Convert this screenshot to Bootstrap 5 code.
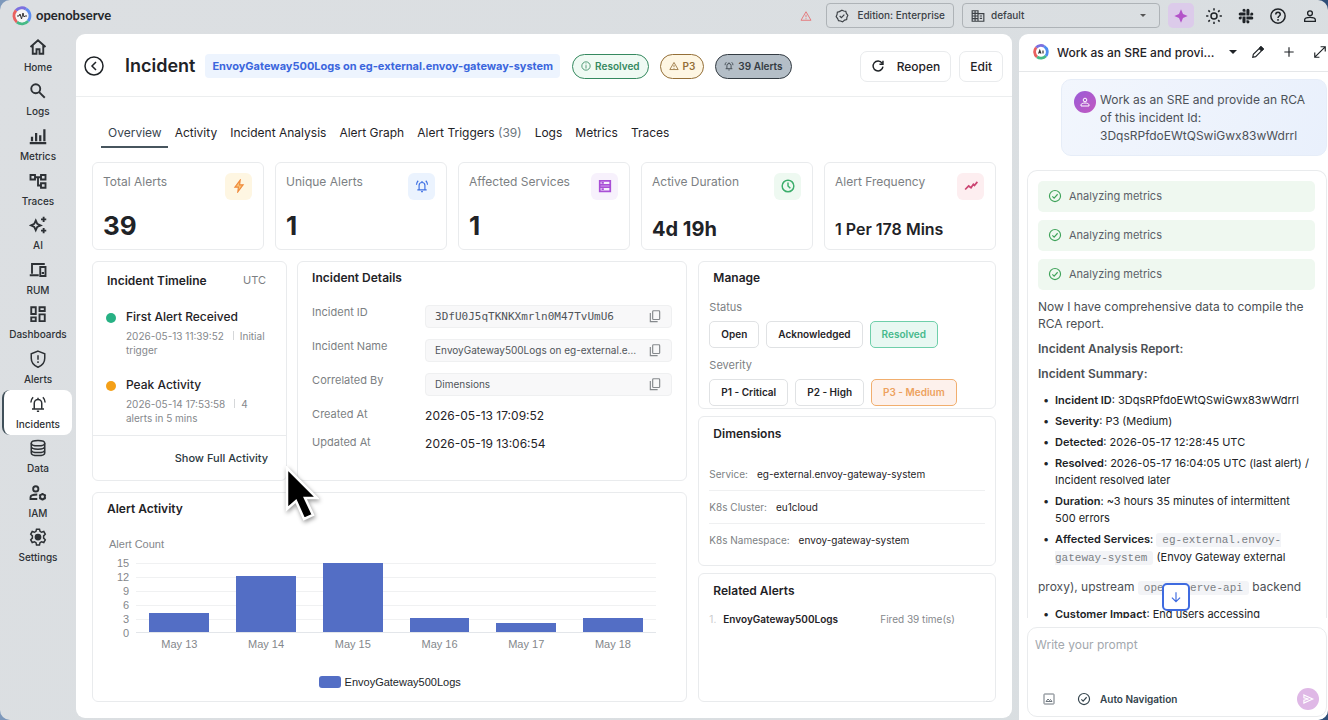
<!DOCTYPE html>
<html lang="en">
<head>
<meta charset="utf-8">
<meta name="viewport" content="width=device-width, initial-scale=1">
<title>OpenObserve - Incident</title>
<link rel="stylesheet" href="https://cdn.jsdelivr.net/npm/bootstrap@5.3.0/dist/css/bootstrap.min.css">
<style>
:root{--line:#e9ebed;--ink:#1f2327;--muted:#7c7f83;--blue:#3b66dd}
body{font-family:Inter,"Liberation Sans",sans-serif;font-size:12px;line-height:17px;color:var(--ink);background:linear-gradient(90deg,#7d98bb,#4b6a70 30%,#2f4e78)}
svg{display:block;flex:none;fill:none;stroke:currentColor;stroke-width:2}
.sw25{stroke-width:2.5}.sw3{stroke-width:3}.solid{fill:currentColor;stroke:none}
button{font:inherit;color:inherit}
a{color:inherit;text-decoration:none}
.i10{width:10px;height:10px}.i12{width:12px;height:12px}.i14{width:14px;height:14px}.i16{width:16px;height:16px}.i18{width:18px;height:18px}.i20{width:20px;height:20px}
.shell{background:linear-gradient(120deg,#dcdfe2,#d9dee1);border-radius:10px}
.topbar{height:34px;padding:0 10px 2px 12px}
.brandtext{font-family:Lato,Inter,sans-serif;font-size:13px;font-weight:700;color:#24262a}
.warnicon{color:#e57b7e;margin-right:14px}
.topbox{height:25px;border:1px solid #aeb3b7;border-radius:4px;font-weight:500;font-size:10px;color:#3c4146;background:none}
.topbox select{appearance:none;border:0;background:transparent url("data:image/svg+xml,%3Csvg xmlns='http://www.w3.org/2000/svg' viewBox='0 0 8 5'%3E%3Cpath d='M1 1h6L4 4z' fill='%23555'/%3E%3C/svg%3E") no-repeat right 12px center/8px 5px;font:inherit;color:inherit;padding:0 24px 0 6px}
.orgbox{width:198px}
.topicons{gap:15px}
.plain{border:0;background:none;padding:0}
.ai-on{width:26px;height:25px;border:0;padding:0;margin-right:-4px;border-radius:5px;background:#dccbea;color:#b353c9}
.side{width:76px;flex:none}
.side ul{height:535px}
.side li{flex:1 1 0}
.side a{display:flex;flex-direction:column;align-items:center;justify-content:center;gap:4px;height:100%;margin:0 4px 0 2px;padding-top:1px;font-size:10px;font-weight:500;line-height:15px;color:#2d3135;border-radius:8px;border-left:2px solid transparent}
.side a.active{background:#fff;border-left-color:#40505a}
.panel{background:#fff;border-radius:9px;margin-bottom:2px}
.chat{flex:0 0 309px;background:#fff;border-radius:9px 0 10px 0;margin-left:7px}
.mainhead{height:63px;border-bottom:1px solid #eceeef;padding:3px 9px 0 8px}
.mainhead h1{font-size:18px;line-height:24px;font-weight:600;margin:0 10px 0 21px}
.titlechip{background:#edf4fe;color:var(--blue);border-radius:4px;padding:4px 7px;font-size:11px;line-height:16px;font-weight:700}
.pills{gap:11px;margin-left:12px}
.pill{border:1px solid;border-radius:13px;height:25px;font-size:10px;font-weight:600;padding:0 8px;gap:4px}
.ok{color:#35895f;background:#effaf3}.warnp{color:#946f38;background:#fef6e3}.cnt{color:#343c43;background:#b4bec7}
.outbtn{border:1px solid var(--line);border-radius:7px;height:31px;background:#fff;font-weight:500;padding:0 10px}
.tabs{padding:26px 16px 0 25px}
.tabs .nav-link{padding:0 6px 3px 7px;line-height:20px;color:var(--ink);border-bottom:2px solid transparent;font-size:12px;font-weight:400}
.tabs .nav-link.active{border-color:#47555e;color:#38454e}
.content{padding:14px 16px 16px}
.gap11{gap:11px}
.gap7{gap:7px}
.stat{border:1px solid var(--line);border-radius:6px;flex:1 1 0;height:88px;padding:10px 11px 5px 10px;min-width:0}
.stat .lab{color:var(--muted);font-size:12px}
.stat .sq{width:27px;height:27px;border-radius:6px}
.stat .big{font-size:26px;line-height:36px;font-weight:700}
.stat .mid{font-size:20px;line-height:30px;font-weight:700}
.stat .low{font-size:16px;line-height:30px;font-weight:600}
.tone-a{background:#fef6e2;color:#ef8a3c}.tone-b{background:#ebf3fe;color:#3d6fe3}.tone-c{background:#f7f1fc;color:#a94fd6}.tone-d{background:#eef9f1;color:#3cae6c}.tone-e{background:#fdeef0;color:#cc4673}
.box{border:1px solid var(--line);border-radius:6px}
.lower{display:grid;grid-template-columns:2fr 1fr;gap:11px;flex:1}
.upper{display:grid;grid-template-columns:1fr 2fr;gap:10px;height:220px}
h2{font-size:12px;line-height:17px;font-weight:600;margin:0}
.soft{color:var(--muted);font-size:11px}
.tlhead{padding:10px 16px 0 14px}
.event{gap:10px;padding:19px 16px 0 13px}
.event strong{display:block;font-weight:500;margin-bottom:4px}
.event .sep{display:inline-block;width:1px;height:9px;background:#d5d7d9;margin:0 6px 0 9px}
.dot{width:10px;height:10px;border-radius:50%;margin-top:5px;flex:none}
.green{background:#27b184}.amber{background:#f4a018}
.tlfoot{border-top:1px solid var(--line);padding:13px 18px 13px 0}
.strongbtn{font-size:11px;font-weight:500;color:#2b3840}
.tiny{font-size:10px;line-height:14px;color:#85888c}
.details{margin:0;padding-top:19px}
.drow{display:grid;grid-template-columns:113px 1fr;height:34px}
.drow.short{height:28px}
.drow dt{font-weight:400;font-size:11px;line-height:14px;color:var(--muted)}
.drow dd{margin:0;min-width:0}
.val{background:#f8f8f9;border:1px solid #eff0f1;border-radius:4px;height:23px;padding:0 9px;font-size:10px;color:#50555a}
.val svg{color:#85898d}
.val code{font-family:"DejaVu Sans Mono","Liberation Mono",monospace;font-size:11px;color:#50555a}
.opt{border:1px solid #e0e2e4;border-radius:5px;height:27px;background:#fff;padding:0 11px;font-size:10px;font-weight:600}
.opt.g{border-color:#6fcfaa;background:#e8f8f2;color:#46b98c}
.opt.o{border-color:#f1ae6e;background:#fdf1ec;color:#eda25e}
.dim{padding:8px 0;border-bottom:1px solid #eff0f1;font-size:10px;line-height:16px}
.dim:last-child{border:0}
.dim span{color:var(--muted);margin-right:9px}
.rank{color:#c9cbcd}
.chartbox{padding:7px 14px}
.plot{height:70px;background:repeating-linear-gradient(#f0f1f2 0 1px,transparent 1px 14px);border-bottom:1px solid #e3e6ea}
.plot div{flex:1 1 0;display:flex;align-items:flex-end;justify-content:center}
.plot i{display:block;width:69%;background:#536ec5}
.axis{font-family:"Liberation Sans",sans-serif;font-size:11px;line-height:14px;color:#84878b}
.swatch{width:22px;height:12px;border-radius:3px;background:#536ec5}
.chathead{height:38px;border-bottom:1px solid #e5e7e9;padding:0 0 0 14px}
.chathead h2{font-weight:500;width:158px}
.chattools{gap:17px;margin-left:13px}
.bubble{margin:7px 1px 0 42px;background:linear-gradient(115deg,#f2f6fd,#e9f0fc);border:1px solid #e6edf8;border-radius:10px;padding:11px 12px 10px;line-height:18px;color:#4c5158}
.avatar{width:22px;height:22px;border-radius:50%;background:linear-gradient(135deg,#9a5bd8,#c259c0);color:#fff;flex:none}
.answer{border:1px solid var(--line);border-bottom:0;border-radius:10px 10px 0 0;margin:14px 1px 0 8px;padding:10px 11px 0 10px;color:#4c5055}
.step{height:31px;border-radius:5px;background:#eff8f0;margin-bottom:8px;padding:0 10px;font-size:11px;color:#5b6168;gap:7px}
.step svg{color:#40a35b}
.answer p{margin:0 0 8px}
.answer ul{list-style-type:"•\00a0\00a0";margin:0 4px 0 0;padding-left:17px;font-size:11px;color:#202326}
.answer ul.facts{padding-top:2px}
.answer li{margin-bottom:4px}
.answer code{font-family:"Liberation Mono",monospace;font-size:11px;color:#7b7f84;background:#f3f4f7;padding:1px 6px;border-radius:3px}
.answer strong{font-weight:600}
.answer .more{margin:11px 0 9px}
.jump{left:50%;bottom:7px;margin-left:-12px;width:28px;height:28px;border:2px solid #3f6be0;border-radius:5px;background:#fff;color:#3f6be0;padding:0}
.prompt{border:1px solid var(--line);border-radius:10px;margin:9px 1px 3px 8px;height:90px;padding:8px 7px 6px 7px}
.prompt textarea{border:0;resize:none;width:100%;padding:0;outline:0;font:inherit}
.prompt textarea::placeholder{color:#a3a8ae}
.auto{margin-left:22px;gap:9px;font-size:10px;font-weight:600;color:#33434c}
.send{width:22px;height:22px;border-radius:50%;background:#dfb8e6;color:#fff;border:0;padding:0}
.pointer{left:285px;top:466px;width:34px;height:60px;filter:drop-shadow(1px 2px 2px #0006)}
</style>
</head>
<body>
<svg width="0" height="0" class="position-absolute" aria-hidden="true">
<symbol id="bell" viewBox="0 0 24 24"><path d="M7 18v-7a5 5 0 0110 0v7M4 18.500h16M10.500 21.500h3M12 6V3.500M2.500 10c0-3 1-5 3-7M21.500 10c0-3-1-5-3-7"/></symbol>
<symbol id="check" viewBox="0 0 24 24"><circle cx="12" cy="12" r="9.500"/><path d="M7.500 12.500l3 3 6-6.500"/></symbol>
<symbol id="tri" viewBox="0 0 24 24"><path d="M12 3.500L22 20.500H2zM12 9.500v5M12 16.500v2"/></symbol>
<symbol id="copy" viewBox="0 0 24 24"><rect x="8" y="3" width="12" height="15" rx="1.500"/><path d="M4 7v14.500h12.500"/></symbol>
<symbol id="user" viewBox="0 0 24 24"><circle cx="12" cy="8" r="3.600"/><path d="M4 20v-2.500c0-2 4-3.500 8-3.500s8 1.500 8 3.500V20z"/></symbol>
</svg>
<div class="shell vh-100 d-flex flex-column overflow-hidden">
<header class="topbar d-flex align-items-center">
  <a href="#" class="d-flex align-items-center gap-1 me-auto" aria-label="openobserve home">
    <svg width="20" height="20" viewBox="0 0 20 20"><g stroke-width="3"><path d="M4 4.500A8 8 0 0114 3" stroke="#7c70df"/><path d="M14 3a8 8 0 012 12" stroke="#5b8df0"/><path d="M16 15a8 8 0 01-11 1" stroke="#45ba87"/><path d="M5 16A8 8 0 014 4.500" stroke="#e9605f"/></g><circle cx="10" cy="10" r="6.500" fill="#f5f5f6" stroke="none"/><path d="M5 10h2l1-2 1.500 5 1.500-6 1 4 1-1h2" stroke="#333" stroke-width="1"/></svg>
    <span class="brandtext">openobserve</span>
  </a>
  <svg class="i12 warnicon"><use href="#tri"/></svg>
  <button class="topbox d-flex align-items-center gap-2 px-2 me-2"><svg class="i14" viewBox="0 0 24 24"><path d="M12 2l3 1.500 3.500.5 1 3.500L22 11l-1.500 3-.5 4-3.500 1-3.500 3-3.500-1.500L6 20l-1.500-3.500L2 13l1.500-3.500L4 5.500 7.500 4.500z"/><path d="M8 12l3 3 5-5.500"/></svg>Edition: Enterprise</button>
  <div class="topbox orgbox d-flex align-items-center ps-2"><svg class="i14" viewBox="0 0 24 24"><path d="M2 3h10v18H2zM12 8h10v13H12M2 7.500h10M2 12h10M2 16.500h10M7 3v18M15 12h4M15 16h4"/></svg><select class="w-100" aria-label="Organization"><option>default</option></select></div>
  <div class="topicons d-flex align-items-center ms-2">
  <button class="ai-on d-flex align-items-center justify-content-center" aria-label="AI"><svg class="i16 solid" viewBox="0 0 24 24"><path d="M12 2l3 7 7 3-7 3-3 7-3-7-7-3 7-3z"/></svg></button>
  <button class="plain" aria-label="Theme"><svg class="i18" viewBox="0 0 24 24"><circle cx="12" cy="12" r="4"/><path d="M12 1.500v3M12 19.500v3M1.500 12h3M19.500 12h3M4.500 4.500l2 2M17.500 17.500l2 2M4.500 19.500l2-2M17.500 6.500l2-2"/></svg></button>
  <button class="plain" aria-label="Slack"><svg class="i16 solid" viewBox="0 0 24 24"><path d="M9 1a2.300 2.300 0 000 4.600h2.300V3.300A2.300 2.300 0 009 1zM3.300 6.800h8v4.600h-8a2.300 2.300 0 010-4.600zM23 9.100a2.300 2.300 0 00-4.600 0v2.300h2.300A2.300 2.300 0 0023 9.100zM12.600 3.300a2.300 2.300 0 014.600 0v8.100h-4.600zM12.600 12.700h8.100a2.300 2.300 0 010 4.600h-8.100zM12.600 18.500h2.300a2.300 2.300 0 11-2.300 2.300zM6.700 12.700h4.600v8a2.300 2.300 0 01-4.600 0zM1 15a2.300 2.300 0 012.300-2.300h2.300V15A2.300 2.300 0 011 15z"/></svg></button>
  <button class="plain" aria-label="Help"><svg class="i18" viewBox="0 0 24 24"><circle cx="12" cy="12" r="9.500"/><path d="M9 10a3 3 0 116 0c0 2-3 2-3 4.500M12 16v2.200"/></svg></button>
  <button class="plain" aria-label="Account"><svg class="i16"><use href="#user"/></svg></button>
  </div>
</header>
<div class="d-flex flex-grow-1" style="min-height:0">
<nav class="side"><ul class="list-unstyled d-flex flex-column m-0">
<li><a href="#"><svg class="i18 sw25" viewBox="0 0 24 24"><path d="M2 12L12 3l10 9M5 10v11h5v-6h4v6h5V10"/></svg>Home</a></li>
<li><a href="#"><svg class="i18 sw25" viewBox="0 0 24 24"><circle cx="9" cy="9" r="6"/><path d="M13.500 13.500L21 21"/></svg>Logs</a></li>
<li><a href="#"><svg class="i18 sw3" viewBox="0 0 24 24"><path d="M1 21.500h22M4 19v-6M9.500 19V8M15 19v-8M20.500 19V3"/></svg>Metrics</a></li>
<li><a href="#"><svg class="i18 sw25" viewBox="0 0 24 24"><path d="M2 4h6v6H2zM16 4h6v6h-6zM16 15h6v6h-6zM8 7h8M12 7v11h4"/></svg>Traces</a></li>
<li><a href="#"><svg class="i18 sw25" viewBox="0 0 24 24"><path d="M9 6l2 4.500 4.500 2-4.500 2L9 19l-2-4.500-4.500-2 4.500-2zM19.500 1v7M16 4.500h7M19.500 16v7M16 19.500h7"/></svg>AI</a></li>
<li><a href="#"><svg class="i18 sw25" viewBox="0 0 24 24"><path d="M21 4H4v13M1 19h12M15 8h7v12h-7zM17 16h3"/></svg>RUM</a></li>
<li><a href="#"><svg class="i18 sw25" viewBox="0 0 24 24"><path d="M3 3h6v9H3zM14 3h7v5h-7zM3 16.500h6v5H3zM14 12.500h7v9h-7z"/></svg>Dashboards</a></li>
<li><a href="#"><svg class="i18" viewBox="0 0 24 24"><path d="M12 1.500l9 3.500v6c0 6-4 10-9 12-5-2-9-6-9-12V5zM12 7v6M12 15v2.200"/></svg>Alerts</a></li>
<li><a href="#" class="active" aria-current="page"><svg class="i18"><use href="#bell"/></svg>Incidents</a></li>
<li><a href="#"><svg class="i18" viewBox="0 0 24 24"><ellipse cx="12" cy="5.500" rx="9" ry="3.500"/><path d="M3 5.500v13c0 2 4 3.500 9 3.500s9-1.500 9-3.500v-13M3 10c0 2 4 3.500 9 3.500s9-1.500 9-3.500M3 14.500C3 16.500 7 18 12 18s9-1.500 9-3.500"/></svg>Data</a></li>
<li><a href="#"><svg class="i18 sw25" viewBox="0 0 24 24"><circle cx="9" cy="6.500" r="3.500"/><path d="M11 20H2v-2.500C2 15 6 14 11 14"/><circle cx="18" cy="17" r="3.200"/><path d="M18 12v2M18 20v2M13.700 14.500l1.700 1M20.600 18.500l1.700 1M13.700 19.500l1.700-1M20.600 15.500l1.700-1"/></svg>IAM</a></li>
<li><a href="#"><svg class="i18" viewBox="0 0 24 24"><path d="M10 1.500h4l.7 3 2 1.200 3-1 2 3.600-2.200 2.200v3l2.200 2.200-2 3.600-3-1-2 1.200-.7 3h-4l-.7-3-2-1.200-3 1-2-3.600L4.500 13.500v-3L2.300 8.300l2-3.600 3 1 2-1.200z"/><circle cx="12" cy="12" r="3.500" fill="currentColor"/></svg>Settings</a></li>
</ul></nav>
<main class="panel flex-grow-1 d-flex flex-column overflow-hidden" style="min-width:0">
  <div class="mainhead d-flex align-items-center">
    <button class="plain" aria-label="Back"><svg class="i20" viewBox="0 0 20 20"><g stroke-width="1.500"><circle cx="10" cy="10" r="9"/><path d="M12 6l-4 4 4 4"/></g></svg></button>
    <h1>Incident</h1>
    <span class="titlechip text-nowrap">EnvoyGateway500Logs on eg-external.envoy-gateway-system</span>
    <div class="pills d-flex">
    <span class="pill ok d-flex align-items-center"><svg class="i10" viewBox="0 0 24 24"><circle cx="12" cy="12" r="10"/><path d="M12 10v8M12 6v2"/></svg>Resolved</span>
    <span class="pill warnp d-flex align-items-center"><svg class="i10"><use href="#tri"/></svg>P3</span>
    <span class="pill cnt d-flex align-items-center text-nowrap"><svg class="i10"><use href="#bell"/></svg>39 Alerts</span>
    </div>
    <button class="outbtn d-flex align-items-center ms-auto" style="gap:12px"><svg class="i14" viewBox="0 0 24 24"><path stroke-width="2.500" d="M19 7a8.500 8.500 0 101.500 6M20.500 3v6h-6"/></svg>Reopen</button>
    <button class="outbtn ms-2">Edit</button>
  </div>
  <nav class="nav tabs flex-nowrap text-nowrap">
    <a class="nav-link active" href="#">Overview</a><a class="nav-link" href="#">Activity</a><a class="nav-link" href="#">Incident Analysis</a><a class="nav-link" href="#">Alert Graph</a><a class="nav-link" href="#">Alert Triggers <span class="text-secondary">(39)</span></a><a class="nav-link" href="#">Logs</a><a class="nav-link" href="#">Metrics</a><a class="nav-link" href="#">Traces</a>
  </nav>
  <div class="content flex-grow-1 d-flex flex-column gap11">
    <div class="d-flex gap11 text-nowrap">
      <div class="stat d-flex flex-column justify-content-between"><div class="d-flex justify-content-between"><span class="lab">Total Alerts</span><span class="sq tone-a d-flex align-items-center justify-content-center"><svg class="i14" viewBox="0 0 24 24"><path d="M14 2L5 14h6l-1 8 9-12h-6z" fill="#f9c274"/></svg></span></div><div class="big">39</div></div>
      <div class="stat d-flex flex-column justify-content-between"><div class="d-flex justify-content-between"><span class="lab">Unique Alerts</span><span class="sq tone-b d-flex align-items-center justify-content-center"><svg class="i14"><use href="#bell"/></svg></span></div><div class="big">1</div></div>
      <div class="stat d-flex flex-column justify-content-between"><div class="d-flex justify-content-between"><span class="lab">Affected Services</span><span class="sq tone-c d-flex align-items-center justify-content-center"><svg class="i14 sw3" viewBox="0 0 24 24"><path d="M3 3h18v7H3zM3 14h18v7H3zM3 10v4M21 10v4M6 6.500h4M6 17.500h4"/></svg></span></div><div class="big">1</div></div>
      <div class="stat d-flex flex-column justify-content-between"><div class="d-flex justify-content-between"><span class="lab">Active Duration</span><span class="sq tone-d d-flex align-items-center justify-content-center"><svg class="i14 sw25" viewBox="0 0 24 24"><circle cx="12" cy="12" r="10"/><path d="M12 6v6l4 4"/></svg></span></div><div class="mid">4d 19h</div></div>
      <div class="stat d-flex flex-column justify-content-between"><div class="d-flex justify-content-between"><span class="lab">Alert Frequency</span><span class="sq tone-e d-flex align-items-center justify-content-center"><svg class="i14 sw3" viewBox="0 0 24 24"><path d="M2 18l6-6 4 3 4-6 2 2 5-6"/></svg></span></div><div class="low">1 Per 178 Mins</div></div>
    </div>
    <div class="lower">
      <div class="d-flex flex-column gap11">
        <div class="upper">
          <section class="box d-flex flex-column overflow-hidden">
            <div class="tlhead d-flex justify-content-between"><h2>Incident Timeline</h2><span class="soft me-1">UTC</span></div>
            <div class="event d-flex"><span class="dot green"></span><div><strong>First Alert Received</strong><div class="tiny">2026-05-13 11:39:52<span class="sep"></span>Initial trigger</div></div></div>
            <div class="event d-flex"><span class="dot amber"></span><div><strong>Peak Activity</strong><div class="tiny">2026-05-14 17:53:58<span class="sep"></span>4 alerts in 5 mins</div></div></div>
            <div class="tlfoot mt-auto text-end"><button class="plain strongbtn">Show Full Activity</button></div>
          </section>
          <section class="box" style="padding:7px 14px">
            <h2>Incident Details</h2>
            <dl class="details">
              <div class="drow"><dt>Incident ID</dt><dd><div class="val d-flex align-items-center"><code class="me-auto">3DfU0J5qTKNKXmrln0M47TvUmU6</code><button class="plain" aria-label="Copy incident ID"><svg class="i14"><use href="#copy"/></svg></button></div></dd></div>
              <div class="drow"><dt>Incident Name</dt><dd><div class="val d-flex align-items-center"><span class="text-truncate me-auto pe-2">EnvoyGateway500Logs on eg-external.envoy-gateway-system</span><button class="plain" aria-label="Copy incident name"><svg class="i14"><use href="#copy"/></svg></button></div></dd></div>
              <div class="drow"><dt>Correlated By</dt><dd><div class="val d-flex align-items-center"><span class="me-auto">Dimensions</span><button class="plain" aria-label="Copy correlation"><svg class="i14"><use href="#copy"/></svg></button></div></dd></div>
              <div class="drow short"><dt>Created At</dt><dd>2026-05-13 17:09:52</dd></div>
              <div class="drow short"><dt>Updated At</dt><dd>2026-05-19 13:06:54</dd></div>
            </dl>
          </section>
        </div>
        <section class="box chartbox flex-grow-1">
          <h2>Alert Activity</h2>
          <div class="axis" style="margin:20px 0 5px 2px">Alert Count</div>
          <div class="d-flex" style="margin:0 16px 0 10px">
            <div class="axis text-end" style="width:12px">15<br>12<br>9<br>6<br>3<br>0</div>
            <div class="flex-grow-1" style="margin:7px 0 0 7px">
              <div class="plot d-flex"><div><i style="height:27%"></i></div><div><i style="height:80%"></i></div><div><i style="height:100%"></i></div><div><i style="height:20%"></i></div><div><i style="height:13%"></i></div><div><i style="height:20%"></i></div></div>
              <div class="axis d-flex text-center pt-1"><span class="col">May 13</span><span class="col">May 14</span><span class="col">May 15</span><span class="col">May 16</span><span class="col">May 17</span><span class="col">May 18</span></div>
            </div>
          </div>
          <div class="axis text-body d-flex align-items-center justify-content-center gap-1 mt-4"><span class="swatch"></span>EnvoyGateway500Logs</div>
        </section>
      </div>
      <div class="d-flex flex-column gap7">
        <section class="box" style="height:148px;padding:7px 10px">
          <h2 class="ms-1">Manage</h2>
          <div class="soft" style="margin:13px 0 5px">Status</div>
          <div class="d-flex text-nowrap gap7"><button class="opt">Open</button><button class="opt">Acknowledged</button><button class="opt g">Resolved</button></div>
          <div class="soft" style="margin:9px 0 5px">Severity</div>
          <div class="d-flex text-nowrap gap7"><button class="opt">P1 - Critical</button><button class="opt">P2 - High</button><button class="opt o">P3 - Medium</button></div>
        </section>
        <section class="box" style="height:150px;padding:8px 10px">
          <h2 class="ms-1 mb-3">Dimensions</h2>
          <div class="dim"><span>Service:</span>eg-external.envoy-gateway-system</div>
          <div class="dim"><span>K8s Cluster:</span>eu1cloud</div>
          <div class="dim"><span>K8s Namespace:</span>envoy-gateway-system</div>
        </section>
        <section class="box flex-grow-1" style="padding:8px 10px">
          <h2 class="ms-1">Related Alerts</h2>
          <div class="d-flex align-items-center mt-2 pt-1"><span class="tiny rank">1.</span><span style="margin-left:7px;font-size:10px;font-weight:600">EnvoyGateway500Logs</span><span class="ms-auto tiny" style="margin-right:30px">Fired 39 time(s)</span></div>
        </section>
      </div>
    </div>
  </div>
</main>
<aside class="chat d-flex flex-column overflow-hidden">
  <div class="chathead d-flex align-items-center flex-shrink-0">
    <svg class="i16 me-2" viewBox="0 0 20 20"><g stroke-width="3.500"><path d="M4 4.500A8 8 0 0114 3" stroke="#7c70df"/><path d="M14 3a8 8 0 012 12" stroke="#4d8cf0"/><path d="M16 15a8 8 0 01-11 1" stroke="#45ba87"/><path d="M5 16A8 8 0 014 4.500" stroke="#e9605f"/></g><path d="M7 12l1.500-4 1.500 4M12.500 8v4" stroke="#333" stroke-width="1.500"/></svg>
    <h2 class="text-truncate">Work as an SRE and provide an RCA</h2>
    <div class="chattools d-flex align-items-center flex-shrink-0">
    <button class="plain" aria-label="History"><svg width="10" height="6" viewBox="0 0 10 6"><path d="M1 1h8L5 5z" fill="currentColor" stroke="none"/></svg></button>
    <button class="plain" style="margin-left:-4px" aria-label="Rename"><svg class="i14" viewBox="0 0 24 24"><path d="M3 21l1-5L17 3l4 4L8 20zM14 6l4 4"/><path d="M17 3l4 4-2 2-4-4z" fill="currentColor"/></svg></button>
    <button class="plain" aria-label="New chat"><svg class="i14" viewBox="0 0 24 24"><path d="M12 4v16M4 12h16"/></svg></button>
    <button class="plain" aria-label="Expand"><svg class="i14" viewBox="0 0 24 24"><path d="M4 20L20 4M13 3h8v8M3 13v8h8"/></svg></button>
    </div>
  </div>
  <div class="flex-grow-1 overflow-hidden position-relative" style="min-height:0">
    <div class="bubble d-flex gap-1"><span class="avatar d-flex align-items-center justify-content-center"><svg class="i12"><use href="#user"/></svg></span><div>Work as an SRE and provide an RCA of this incident Id: 3DqsRPfdoEWtQSwiGwx83wWdrrl</div></div>
    <div class="answer">
      <div class="step d-flex align-items-center"><svg class="i14"><use href="#check"/></svg>Analyzing metrics</div>
      <div class="step d-flex align-items-center"><svg class="i14"><use href="#check"/></svg>Analyzing metrics</div>
      <div class="step d-flex align-items-center"><svg class="i14"><use href="#check"/></svg>Analyzing metrics</div>
      <p>Now I have comprehensive data to compile the RCA report.</p>
      <p><strong>Incident Analysis Report:</strong></p>
      <p><strong>Incident Summary:</strong></p>
      <ul class="facts">
        <li><strong>Incident ID</strong>: 3DqsRPfdoEWtQSwiGwx83wWdrrl</li>
        <li><strong>Severity</strong>: P3 (Medium)</li>
        <li><strong>Detected</strong>: 2026-05-17 12:28:45 UTC</li>
        <li><strong>Resolved</strong>: 2026-05-17 16:04:05 UTC (last alert) / Incident resolved later</li>
        <li><strong>Duration</strong>: ~3 hours 35 minutes of intermittent 500 errors</li>
        <li><strong>Affected Services</strong>: <code>eg-external.envoy-gateway-system</code> (Envoy Gateway external</li>
      </ul>
      <p class="more text-nowrap">proxy), upstream <code>openobserve-api</code> backend</p>
      <ul><li><strong>Customer Impact</strong>: End users accessing</li></ul>
    </div>
    <button class="jump position-absolute d-flex align-items-center justify-content-center" aria-label="Scroll to latest"><svg class="i14" viewBox="0 0 24 24"><path d="M12 4v16M5 13l7 7 7-7"/></svg></button>
  </div>
  <div class="prompt d-flex flex-column flex-shrink-0">
    <textarea class="flex-grow-1" placeholder="Write your prompt" aria-label="Prompt"></textarea>
    <div class="d-flex align-items-center ps-2"><button class="plain text-secondary" aria-label="Attach image"><svg class="i12" viewBox="0 0 24 24"><rect x="2" y="2" width="20" height="20" rx="1"/><path d="M6 17l4-5 3 3 2-2 3 4z"/></svg></button><button class="plain auto d-flex align-items-center"><svg class="i14"><use href="#check"/></svg>Auto Navigation</button><button class="send ms-auto d-flex align-items-center justify-content-center" aria-label="Send"><svg class="i14" viewBox="0 0 24 24"><path d="M5 5l15 7-15 7v-5l8-2-8-2z"/></svg></button></div>
  </div>
</aside>
</div>
</div>
<svg class="pointer position-absolute" viewBox="0 0 34 60" aria-hidden="true"><path d="M2 2v41l9-8 8 18 9-4-8-17h12z" fill="#000" stroke="#fff" stroke-width="2.500"/></svg>
<script src="https://cdn.jsdelivr.net/npm/bootstrap@5.3.0/dist/js/bootstrap.bundle.min.js"></script>
</body>
</html>
